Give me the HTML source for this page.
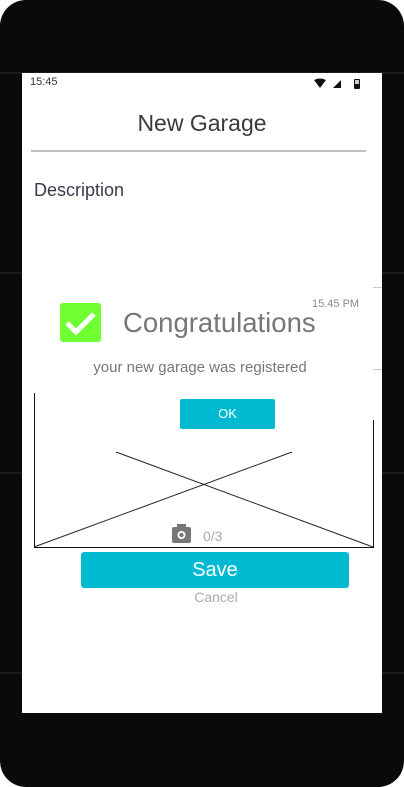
<!DOCTYPE html>
<html><head><style>
body{margin:0;width:404px;height:787px;background:#fff;position:relative;overflow:hidden;font-family:"Liberation Sans",sans-serif}
.frame{position:absolute;left:0;top:0;width:404px;height:787px;background:#0a0a0a;border-radius:26px}
.hl{position:absolute;left:0;width:404px;height:2px;background:#1c1c1c}
.screen{position:absolute;left:22px;top:73px;width:360px;height:640px;background:#fff}
.a{position:absolute}
</style></head><body>
<div class="frame"></div>
<div class="hl" style="top:72px"></div><div class="hl" style="top:272px"></div><div class="hl" style="top:472px"></div><div class="hl" style="top:672px"></div>
<div class="screen">
<div class="a" style="left:8px;top:3px;font-size:11px;color:#333">15:45</div>
<svg class="a" style="left:292px;top:5px" width="56" height="12">
<path d="M0 2 Q6 -1 12 2 L6 10Z" fill="#111"/>
<path d="M19 10 L27 2 L27 10Z" fill="#111"/>
<rect x="40" y="1" width="6" height="10" rx="1" fill="#111"/><rect x="41" y="2" width="4" height="4" fill="#ccc"/>
</svg>
<div class="a" style="left:0;width:360px;top:37px;text-align:center;font-size:23px;color:#3a3a3a">New Garage</div>
<div class="a" style="left:9px;top:77px;width:335px;height:2px;background:#c0c0c0"></div>
<div class="a" style="left:12px;top:107px;font-size:18px;color:#3a3a4a">Description</div>
<div class="a" style="left:351px;top:214px;width:9px;height:1px;background:#ccc"></div>
<div class="a" style="left:351px;top:296px;width:9px;height:1px;background:#ccc"></div>
<div class="a" style="left:290px;top:225px;font-size:11px;color:#888">15.45 PM</div>
<div class="a" style="left:38px;top:230px;width:41px;height:39px;background:#70ff30;border-radius:3px"></div>
<svg class="a" style="left:38px;top:230px" width="41" height="39"><path d="M7 20 L16 29 L34 11" stroke="#fff" stroke-width="5" fill="none"/></svg>
<div class="a" style="left:101px;top:234px;font-size:27.5px;color:#777">Congratulations</div>
<div class="a" style="left:0;width:356px;top:286px;text-align:center;font-size:15px;color:#777">your new garage was registered</div>
<div class="a" style="left:158px;top:326px;width:95px;height:30px;background:#00bad2;border-radius:2px;color:#fff;font-size:13px;text-align:center;line-height:30px">OK</div>
<svg class="a" style="left:0;top:300px" width="360" height="180">
<line x1="12.5" y1="20" x2="12.5" y2="175" stroke="#111"/>
<line x1="351.5" y1="47" x2="351.5" y2="175" stroke="#111"/>
<line x1="12" y1="174.5" x2="352" y2="174.5" stroke="#111"/>
<line x1="12" y1="174" x2="270" y2="79" stroke="#222"/>
<line x1="94" y1="79" x2="351" y2="174" stroke="#222"/>
<rect x="150" y="154" width="19" height="16" rx="2" fill="#777"/><rect x="155" y="151" width="9" height="4" fill="#777"/>
<circle cx="159.5" cy="162" r="4" fill="#fff"/><circle cx="159.5" cy="162" r="2.2" fill="#777"/>
</svg>
<div class="a" style="left:181px;top:455px;font-size:14px;color:#aaa">0/3</div>
<div class="a" style="left:59px;top:479px;width:268px;height:36px;background:#00bad2;border-radius:3px;color:#fff;font-size:20px;text-align:center;line-height:36px">Save</div>
<div class="a" style="left:0;width:388px;top:516px;text-align:center;font-size:14px;color:#aaa">Cancel</div>
</div>
</body></html>
